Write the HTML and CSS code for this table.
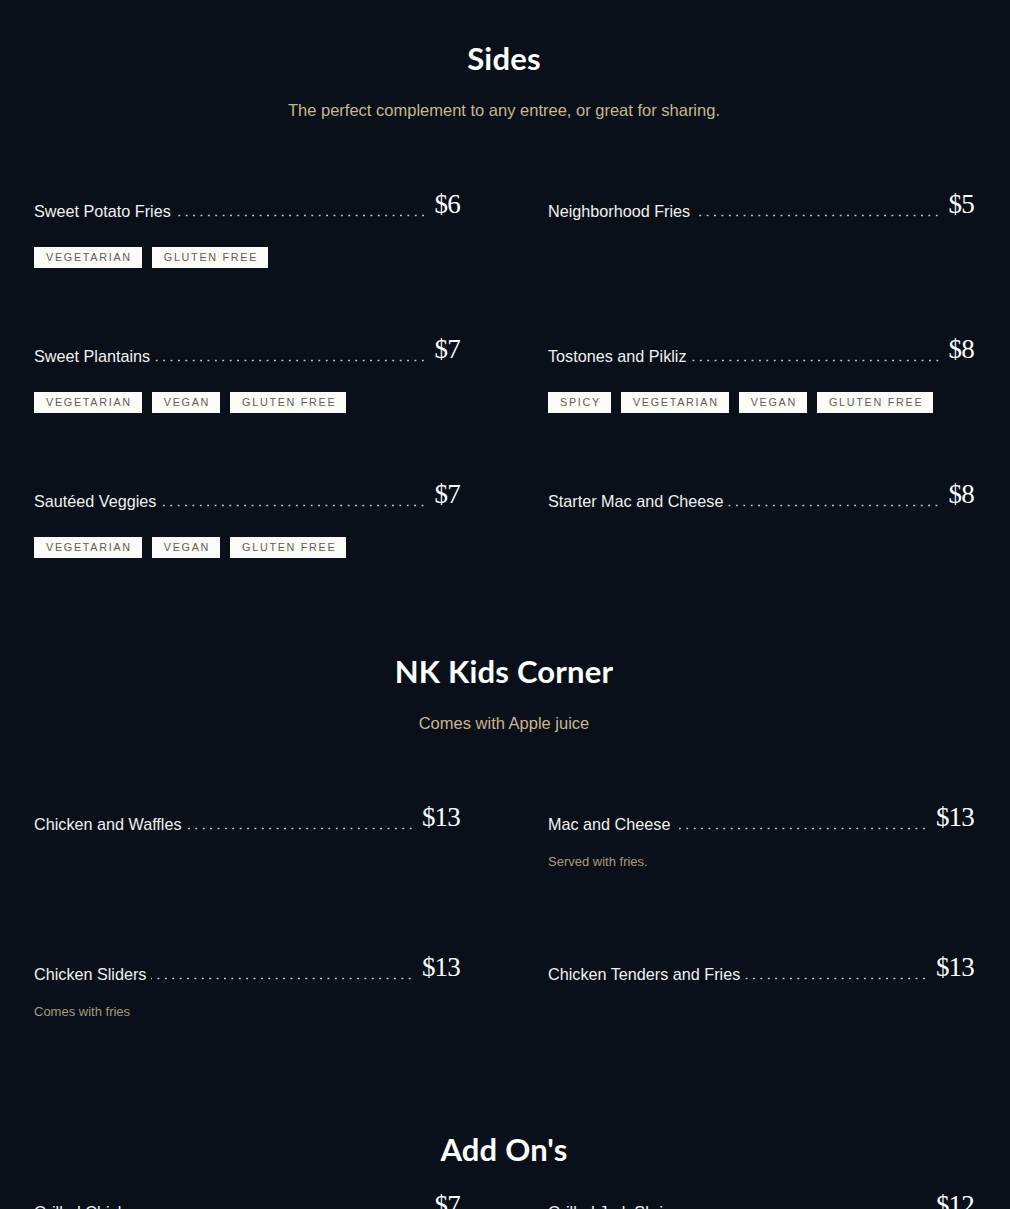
FILE: index.html
```html
<!DOCTYPE html>
<html lang="en">
<head>
<meta charset="utf-8">
<title>Menu</title>
<link rel="stylesheet" href="styles.css">
</head>
<body>
<main class="menu">
  <section class="section">
    <h2 class="section-title">Sides</h2>
    <p class="section-sub">The perfect complement to any entree, or great for sharing.</p>
    <div class="grid grid--tags">
      <div class="item">
        <div class="item-head"><span class="item-name">Sweet Potato Fries</span><span class="leader"></span><span class="item-price">$6</span></div>
        <div class="tags"><span class="tag">Vegetarian</span><span class="tag">Gluten Free</span></div>
      </div>
      <div class="item">
        <div class="item-head"><span class="item-name">Neighborhood Fries</span><span class="leader"></span><span class="item-price">$5</span></div>
      </div>
      <div class="item">
        <div class="item-head"><span class="item-name">Sweet Plantains</span><span class="leader"></span><span class="item-price">$7</span></div>
        <div class="tags"><span class="tag">Vegetarian</span><span class="tag">Vegan</span><span class="tag">Gluten Free</span></div>
      </div>
      <div class="item">
        <div class="item-head"><span class="item-name">Tostones and Pikliz</span><span class="leader"></span><span class="item-price">$8</span></div>
        <div class="tags"><span class="tag">Spicy</span><span class="tag">Vegetarian</span><span class="tag">Vegan</span><span class="tag">Gluten Free</span></div>
      </div>
      <div class="item">
        <div class="item-head"><span class="item-name">Sautéed Veggies</span><span class="leader"></span><span class="item-price">$7</span></div>
        <div class="tags"><span class="tag">Vegetarian</span><span class="tag">Vegan</span><span class="tag">Gluten Free</span></div>
      </div>
      <div class="item">
        <div class="item-head"><span class="item-name">Starter Mac and Cheese</span><span class="leader"></span><span class="item-price">$8</span></div>
      </div>
    </div>
  </section>

  <section class="section">
    <h2 class="section-title">NK Kids Corner</h2>
    <p class="section-sub">Comes with Apple juice</p>
    <div class="grid grid--desc">
      <div class="item">
        <div class="item-head"><span class="item-name">Chicken and Waffles</span><span class="leader"></span><span class="item-price">$13</span></div>
      </div>
      <div class="item">
        <div class="item-head"><span class="item-name">Mac and Cheese</span><span class="leader"></span><span class="item-price">$13</span></div>
        <p class="item-desc">Served with fries.</p>
      </div>
      <div class="item">
        <div class="item-head"><span class="item-name">Chicken Sliders</span><span class="leader"></span><span class="item-price">$13</span></div>
        <p class="item-desc">Comes with fries</p>
      </div>
      <div class="item">
        <div class="item-head"><span class="item-name">Chicken Tenders and Fries</span><span class="leader"></span><span class="item-price">$13</span></div>
      </div>
    </div>
  </section>

  <section class="section">
    <h2 class="section-title">Add On's</h2>
    <div class="grid grid--desc grid--tight">
      <div class="item">
        <div class="item-head"><span class="item-name">Grilled Chicken</span><span class="leader"></span><span class="item-price">$7</span></div>
      </div>
      <div class="item">
        <div class="item-head"><span class="item-name">Grilled Jerk Shrimp</span><span class="leader"></span><span class="item-price">$12</span></div>
      </div>
    </div>
  </section>
</main>
</body>
</html>
```

FILE: styles.css
```css
html, body {
  margin: 0;
  padding: 0;
  background: #09101a;
}

body {
  font-family: "Liberation Sans", Arial, sans-serif;
  color: #f1f1ef;
}

.menu {
  display: flex;
  flex-direction: column;
  padding: 13px 36px 40px 34px;
}

.section {
  display: flex;
  flex-direction: column;
}

.section-title {
  margin: 25px 0 0;
  font-family: Lato, "Liberation Sans", sans-serif;
  font-weight: 700;
  font-size: 31px;
  line-height: 40px;
  text-align: center;
  color: #ffffff;
  letter-spacing: 0.2px;
}

.section-sub {
  margin: 20px 0 44px;
  font-size: 16.5px;
  line-height: 24px;
  text-align: center;
  color: #c9b68c;
}

.grid {
  display: grid;
  grid-template-columns: 1fr 1fr;
  column-gap: 88px;
  margin-top: 25px;
}

.grid--tight {
  margin-top: 23px;
}

.grid--tags {
  grid-auto-rows: 145px;
}

.grid--desc {
  grid-auto-rows: 150px;
}

.item-head {
  display: flex;
  align-items: flex-end;
}

.item-name {
  font-size: 16.2px;
  line-height: 20px;
  color: #f1f1ef;
  white-space: nowrap;
}

.leader {
  flex: 1;
  height: 6px;
  margin: 0 8px 4px 5px;
  background-image: radial-gradient(circle, rgba(225, 225, 220, 0.9) 0.75px, transparent 1.2px);
  background-size: 7.4px 3px;
  background-repeat: repeat-x;
  background-position: right bottom;
}

.item-price {
  font-family: "Liberation Serif", "Times New Roman", serif;
  font-size: 27px;
  line-height: 26px;
  letter-spacing: -0.8px;
  padding-bottom: 4px;
  color: #ffffff;
}

.tags {
  display: flex;
  gap: 10px;
  margin-top: 26px;
}

.tag {
  background: #fbfbf8;
  color: #625d53;
  font-size: 10.8px;
  line-height: 21px;
  letter-spacing: 1.7px;
  text-transform: uppercase;
  padding: 0 10px 0 12px;
}

.item-desc {
  margin: 19px 0 0;
  font-size: 13px;
  line-height: 18px;
  color: #a99a78;
}
```
